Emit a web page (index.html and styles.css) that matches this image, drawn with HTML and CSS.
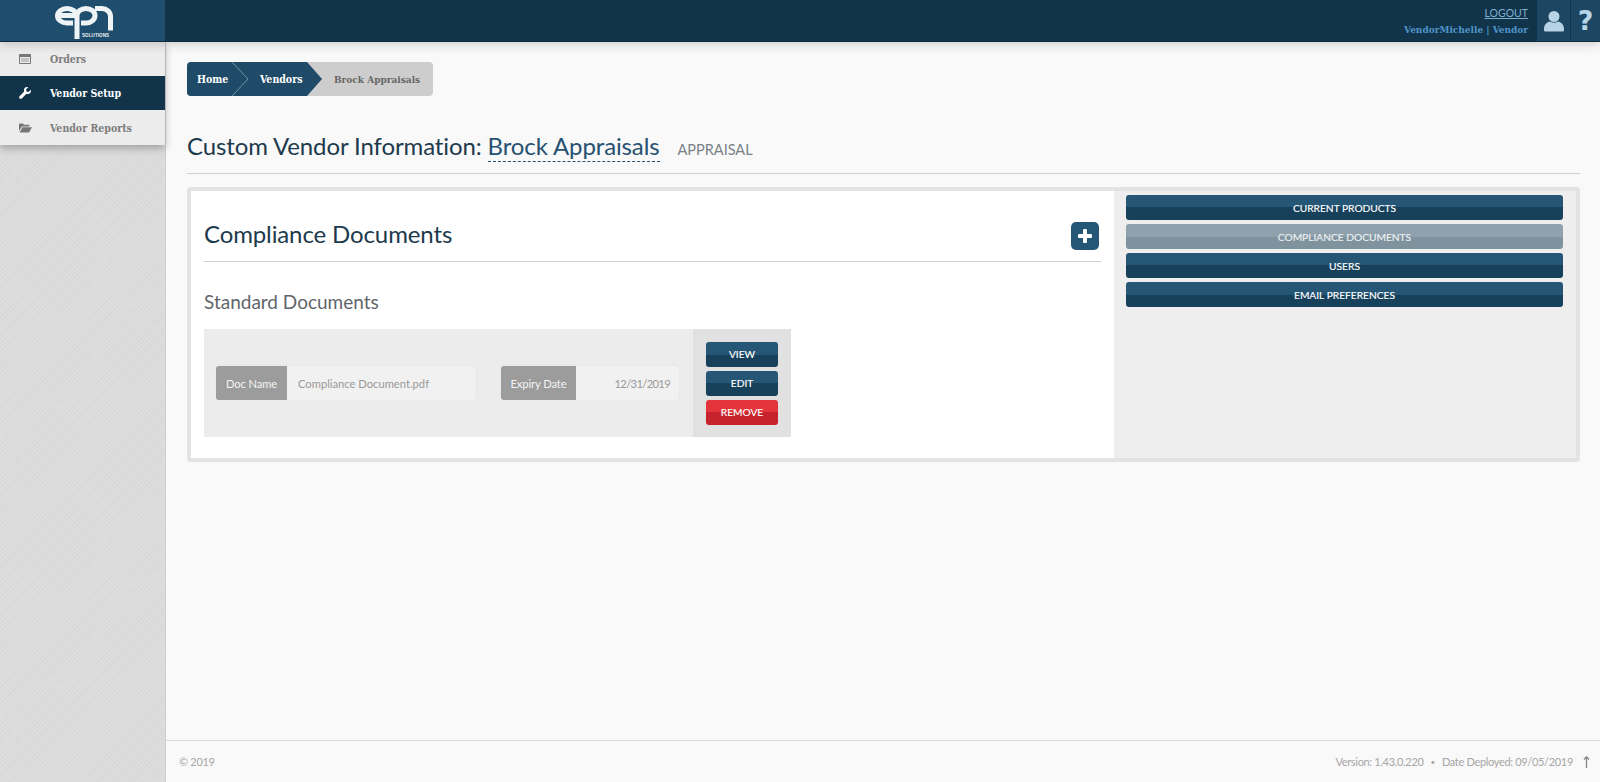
FILE: index.html
```html
<!DOCTYPE html>
<html lang="en">
<head>
<meta charset="utf-8">
<title>Custom Vendor Information</title>
<link rel="stylesheet" href="styles.css">
</head>
<body>
<div class="app">
  <header class="topbar">
    <div class="brand">
      <svg class="logo" viewBox="0 0 70 42" width="70" height="42" aria-label="epn solutions">
        <g fill="none" stroke="#eef3f6" stroke-width="5">
          <path d="M9 15.500H26.500A9.500 7 0 0 0 17 8.500A9.500 7.250 0 0 0 17 23H23"/>
          <path d="M27 39V15.500A9 7 0 0 1 45 15.500A9 7.500 0 0 1 36 23H31"/>
          <path d="M45 8.500H52A8.500 8 0 0 1 60.500 16.500V30.500"/>
        </g>
        <text class="logo-sub" x="32" y="36.500">SOLUTIONS</text>
      </svg>
    </div>
    <div class="topbar-main">
      <div class="userinfo">
        <a class="logout" href="#">LOGOUT</a>
        <span class="username">VendorMichelle | Vendor</span>
      </div>
      <div class="topicon">
        <svg width="20" height="22" viewBox="0 0 20 22"><circle cx="10" cy="6.500" r="5.500" fill="#b7d3e6"/><path d="M1 21.500C0 21.500 0 20.500 0 19C0 14.500 3 12 6 11.500C7.500 13 12.500 13 14 11.500C17 12 20 14.500 20 19C20 20.500 20 21.500 19 21.500Z" fill="#b7d3e6"/></svg>
      </div>
      <div class="topicon">
        <span class="q">?</span>
      </div>
    </div>
  </header>
  <div class="body">
    <aside class="sidebar">
      <nav class="nav">
        <a class="nav-item nav-first" href="#">
          <svg class="nav-icon" width="12" height="10" viewBox="0 0 12 10"><path d="M.5 .5h11v9H.5z" fill="none" stroke="#777"/><path d="M1 1h10v2H1z" fill="#777"/><path d="M2 5h8M2 7h8" stroke="#999"/></svg>
          <span>Orders</span>
        </a>
        <a class="nav-item active" href="#">
          <svg class="nav-icon" width="12" height="12" viewBox="0 0 12 12"><path d="M11.800 2.800L9.500 5 7.500 4.400 7 2.500 9.300 .2C7.500-.3 5.300.5 5 2.500C4.900 3.300 5 4 5.200 4.500L.5 9.200C-.2 10 .1 11 .6 11.400C1.100 11.900 2 12.100 2.800 11.500L7.500 6.800C8.200 7 8.900 7.100 9.600 7C11.500 6.600 12.300 4.600 11.800 2.800Z" fill="#fff"/></svg>
          <span>Vendor Setup</span>
        </a>
        <a class="nav-item" href="#">
          <svg class="nav-icon" width="13" height="10" viewBox="0 0 13 10"><path d="M0 1.500C0 .8.500.5 1 .5H4L5 1.700H9.500C10 1.700 10.500 2 10.500 2.700V3.500H3L0 8Z" fill="#777"/><path d="M3.500 4.300H13L10 9.500H.5Z" fill="#777"/></svg>
          <span>Vendor Reports</span>
        </a>
      </nav>
    </aside>
    <div class="main">
      <main class="content">
        <div class="crumbs">
          <a class="crumb crumb-home" href="#">Home</a>
          <svg class="crumb-sep" width="16" height="34" viewBox="0 0 16 34"><path d="M0 0L16 17 0 34" fill="none" stroke="#6f94ad" stroke-width="1"/></svg>
          <a class="crumb crumb-vendors" href="#">Vendors</a>
          <svg class="crumb-tip" width="15" height="34" viewBox="0 0 15 34"><path d="M0 0L15 17 0 34Z" fill="#1f4a68"/></svg>
          <span class="crumb crumb-current">Brock Appraisals</span>
        </div>
        <h1 class="page-title">Custom Vendor Information: <a class="editable" href="#">Brock Appraisals</a><small class="kind">APPRAISAL</small></h1>
        <section class="card">
          <div class="card-left">
            <div class="section-head">
              <h2 class="section-title">Compliance Documents</h2>
              <button class="add-btn" type="button" aria-label="Add">
                <svg width="14" height="14" viewBox="0 0 14 14"><path d="M7 1.500V12.500M1.500 7H12.500" stroke="#fff" stroke-width="4" stroke-linecap="round"/></svg>
              </button>
            </div>
            <h3 class="sub-title">Standard Documents</h3>
            <div class="doc-row">
              <div class="doc-fields">
                <div class="field field-name"><span class="addon addon-name">Doc Name</span><span class="value">Compliance Document.pdf</span></div>
                <div class="field field-date"><span class="addon addon-date">Expiry Date</span><span class="value value-right">12/31/2019</span></div>
              </div>
              <div class="doc-actions">
                <button class="btn" type="button">VIEW</button>
                <button class="btn" type="button">EDIT</button>
                <button class="btn btn-red" type="button">REMOVE</button>
              </div>
            </div>
          </div>
          <div class="card-right">
            <button class="btn btn-wide" type="button">CURRENT PRODUCTS</button>
            <button class="btn btn-wide btn-muted" type="button">COMPLIANCE DOCUMENTS</button>
            <button class="btn btn-wide" type="button">USERS</button>
            <button class="btn btn-wide" type="button">EMAIL PREFERENCES</button>
          </div>
        </section>
      </main>
      <footer class="footer">
        <span class="copy">© 2019</span>
        <span class="footer-right">Version: 1.43.0.220 <i class="dot">•</i> Date Deployed: 09/05/2019
          <svg class="uparrow" width="7" height="12" viewBox="0 0 7 12"><path d="M3.500 12V1.500M1 3.500L3.500 .8 6 3.500" fill="none" stroke="#888" stroke-width="1.300"/></svg>
        </span>
      </footer>
    </div>
  </div>
</div>
</body>
</html>
```

FILE: styles.css
```css
* { box-sizing: border-box; }
html, body { margin: 0; height: 100%; }
body { font-family: "Lato", "Noto Sans", sans-serif; background: #f9f9f9; color: #1d3a4d; overflow: hidden; }
a { color: inherit; text-decoration: none; }
h1, h2, h3 { margin: 0; font-weight: 400; }
button { font-family: inherit; border: 0; padding: 0; cursor: pointer; }

.app { display: flex; flex-direction: column; height: 782px; }

.topbar { height: 42px; flex: none; display: flex; background: #12344b; border-bottom: 1px solid #0f2c40; position: relative; z-index: 3; box-shadow: 0 2px 10px rgba(0,0,0,.18); }
.brand { width: 165px; flex: none; background: #1f4d6d; display: flex; justify-content: center; padding-left: 5px; }
.logo { display: block; }
.logo-sub { font-family: "Liberation Sans", sans-serif; font-size: 4.500px; font-weight: 700; fill: #eef3f6; letter-spacing: .1px; }
.topbar-main { flex: 1; display: flex; justify-content: flex-end; }
.userinfo { display: flex; flex-direction: column; align-items: flex-end; padding: 5px 8px 0 0; font-size: 10.500px; line-height: 16px; }
.logout { color: #7fb0d0; text-decoration: underline; margin-bottom: 1px; }
.username { color: #4f94c8; font-family: "DejaVu Serif Condensed", serif; font-weight: 700; font-size: 10px; }
.topicon { width: 34px; background: #1c4662; border-left: 1px solid #12344b; display: flex; align-items: center; justify-content: center; height: 41px; }
.topicon + .topicon { width: 30px; }
.q { font-family: "DejaVu Sans", sans-serif; font-weight: 700; font-size: 27px; line-height: 1; color: #b7d3e6; }

.body { flex: 1; display: flex; min-height: 0; }

.sidebar { width: 166px; flex: none; background-color: #dcdcdc; background-image: repeating-linear-gradient(45deg, rgba(255,255,255,.07) 0 1px, transparent 1px 3px), repeating-linear-gradient(-45deg, rgba(0,0,0,.025) 0 1px, transparent 1px 3px); border-right: 1px solid #cfcfcf; }
.nav { background: #ececec; box-shadow: 0 3px 8px rgba(0,0,0,.28); height: 103px; display: flex; flex-direction: column; gap: 1px; width: 165px; }
.nav-item { height: 34px; display: flex; align-items: center; font-family: "DejaVu Serif Condensed", serif; font-weight: 700; font-size: 10.500px; color: #7d7d7d; position: relative; padding-left: 50px; }
.nav-first { height: 33px; }
.nav-icon { position: absolute; left: 19px; top: 50%; transform: translateY(-50%); }
.nav-item.active { background: #12344b; color: #fff; }

.main { flex: 1; min-width: 0; display: flex; flex-direction: column; }
.content { flex: 1; padding: 20px 20px 0 21px; }

.crumbs { display: inline-flex; height: 34px; background: #cdcdcd; border-radius: 4px; overflow: hidden; font-family: "DejaVu Serif Condensed", serif; font-weight: 700; font-size: 10.500px; align-items: center; vertical-align: top; }
.crumb { height: 34px; display: flex; align-items: center; }
.crumb-home { background: #1f4a68; color: #fff; padding-left: 10px; width: 45px; }
.crumb-sep { background: #1f4a68; flex: none; display: block; }
.crumb-vendors { background: #1f4a68; color: #fff; padding-left: 12px; width: 59px; }
.crumb-tip { flex: none; display: block; }
.crumb-current { color: #666; padding: 0 13px 0 12px; font-size: 10px; }

.page-title { font-size: 24px; letter-spacing: -.12px; line-height: 30px; margin-top: 35px; border-bottom: 1px solid #cfcfcf; color: #1d3a4d; height: 43px; }
.editable { color: #265172; border-bottom: 1px dashed #265172; padding-bottom: 1px; }
.kind { font-size: 14.500px; letter-spacing: 0; color: #7b8287; margin-left: 18px; }

.card { margin-top: 13px; height: 275px; border: 4px solid #e3e3e3; border-radius: 3px; display: flex; background: #fff; }
.card-left { width: 923px; flex: none; padding: 0 13px 0 13px; }
.section-head { height: 71px; display: flex; align-items: center; justify-content: space-between; border-bottom: 1px solid #cfcfcf; padding: 14px 2px 0 0; }
.section-title { font-size: 24px; letter-spacing: -.12px; color: #1d3a4d; }
.add-btn { width: 28px; height: 28px; border-radius: 5px; background: #265676; display: flex; align-items: center; justify-content: center; margin-top: 6px; }
.sub-title { font-size: 19px; color: #5f666b; margin-top: 28px; line-height: 24px; }
.doc-row { margin-top: 15px; width: 587px; height: 108px; background: #ececec; display: flex; }
.doc-fields { flex: 1; display: flex; align-items: center; padding-left: 12px; gap: 25px; }
.field { display: flex; height: 34px; background: #f1f1f1; border-radius: 3px; box-shadow: 0 0 1px rgba(0,0,0,.12); font-size: 11.200px; }
.field-name { width: 260px; }
.field-date { width: 178px; }
.addon { background: #9c9c9c; color: #f4f4f4; display: flex; align-items: center; justify-content: center; border-radius: 3px 0 0 3px; flex: none; letter-spacing: -.1px; }
.addon-name { width: 71px; }
.addon-date { width: 75px; }
.value { flex: 1; display: flex; align-items: center; padding: 0 9px 0 11px; color: #999; }
.value-right { justify-content: flex-end; letter-spacing: -.65px; }
.doc-actions { width: 98px; flex: none; background: #e1e1e1; display: flex; flex-direction: column; align-items: center; justify-content: center; gap: 4px; }

.btn { display: block; width: 72px; height: 25px; border-radius: 3px; color: #fff; font-size: 10.200px; -webkit-text-stroke: .15px currentColor; background: linear-gradient(#265676 0 50%, #17405b 50% 100%); }
.btn-red { background: linear-gradient(#e2343a 0 50%, #c6232c 50% 100%); }
.btn-muted { background: linear-gradient(#8ea1ad 0 50%, #7f939f 50% 100%); color: #eef1f3; }

.card-right { flex: 1; background: #eeeeee; padding: 4px 13px 0 12px; display: flex; flex-direction: column; gap: 4px; }
.btn-wide { width: 100%; }

.footer { height: 42px; flex: none; border-top: 1px solid #d9d9d9; display: flex; justify-content: space-between; align-items: center; padding: 0 10px 0 13px; font-size: 11px; letter-spacing: -.32px; color: #a6a6a6; }
.footer-right { display: flex; align-items: center; gap: 4px; }
.dot { font-style: normal; font-size: 8px; margin: 0 3px; }
.uparrow { margin-left: 6px; }
```
